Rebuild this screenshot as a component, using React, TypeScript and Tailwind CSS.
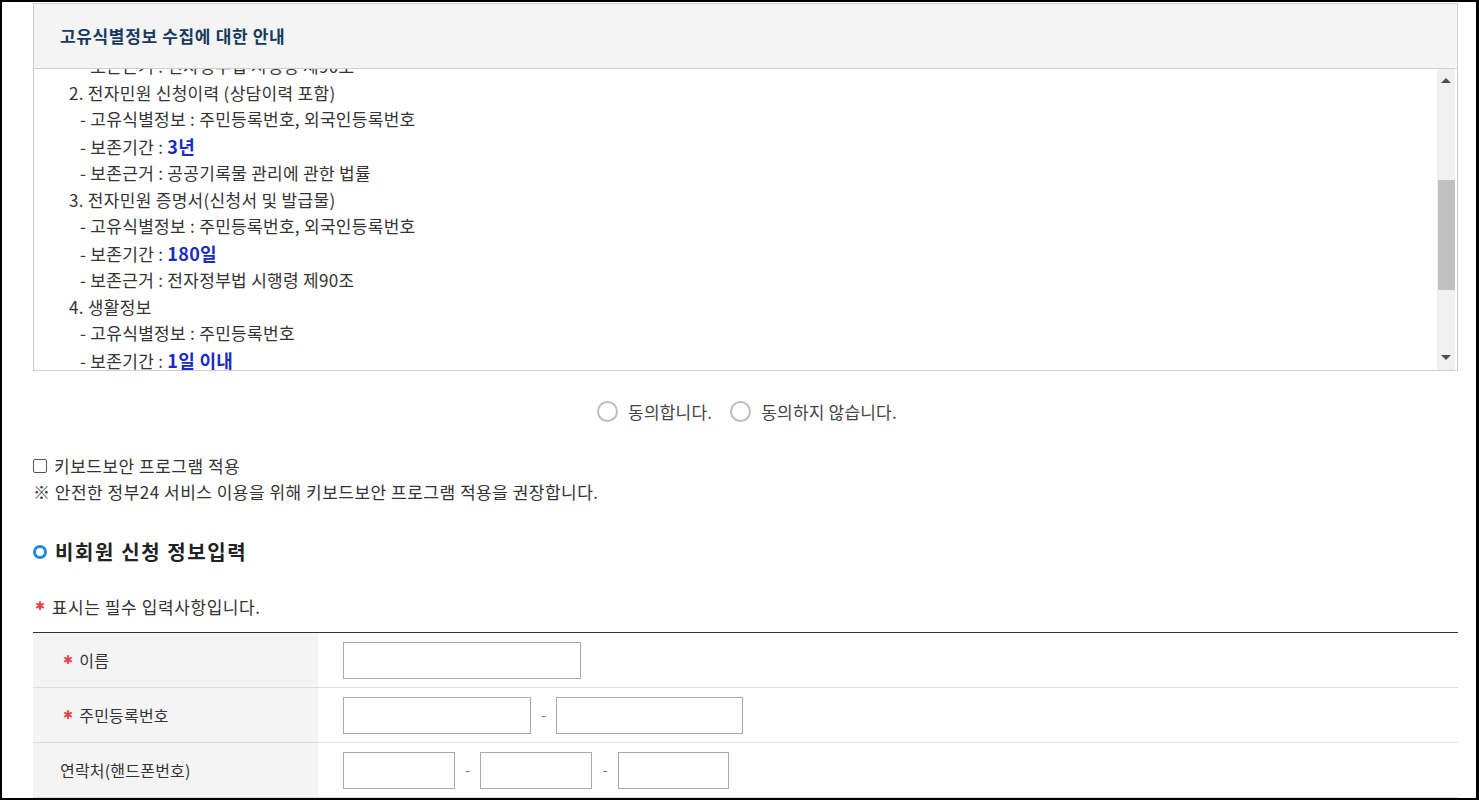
import { useState } from "react";

const retention = [
  { head: "2. 전자민원 신청이력 (상담이력 포함)", items: [
    { k: "고유식별정보", v: "주민등록번호, 외국인등록번호" },
    { k: "보존기간", v: "3년", strong: true },
    { k: "보존근거", v: "공공기록물 관리에 관한 법률" },
  ]},
  { head: "3. 전자민원 증명서(신청서 및 발급물)", items: [
    { k: "고유식별정보", v: "주민등록번호, 외국인등록번호" },
    { k: "보존기간", v: "180일", strong: true },
    { k: "보존근거", v: "전자정부법 시행령 제90조" },
  ]},
  { head: "4. 생활정보", items: [
    { k: "고유식별정보", v: "주민등록번호" },
    { k: "보존기간", v: "1일 이내", strong: true },
  ]},
];

function Req() {
  return <span className="text-[#e3424a] text-[12px] leading-none mr-[6px] font-['DejaVu_Sans',sans-serif]">✱</span>;
}

function Field({ w }: { w: string }) {
  return <input type="text" className={`${w} h-[37px] border border-[#a9a9a9] bg-white outline-none`} />;
}

function Dash() {
  return <span className="mx-[10px] text-[#777] text-[15px]">-</span>;
}

export default function App() {
  const [agree, setAgree] = useState<string | null>(null);
  const [keyboard, setKeyboard] = useState(false);

  return (
    <div className="w-[1479px] h-[800px] overflow-hidden bg-white border-t-2 border-l-2 border-b-2 border-r-[3px] border-black font-['Noto_Sans_CJK_KR','Noto_Sans',sans-serif] text-[#333]">
      <div className="pl-[31px] pr-[18px] pt-px">
        {/* 안내 박스 */}
        <div className="border border-[#cfcfcf]">
          <div className="h-[65px] bg-[#f4f4f4] border-b border-[#cfcfcf] flex items-center pl-[26px]">
            <h2 className="text-[17px] font-bold text-[#173a5e] tracking-[0.65px]">고유식별정보 수집에 대한 안내</h2>
          </div>
          <div className="flex h-[301px]">
            <div className="flex-1 overflow-hidden pl-[35px] text-[17px] leading-[26.5px] tracking-[0.3px] text-[#333]">
              <div className="-mt-[16px]">
                <p className="pl-[11px]">- 보존근거 : 전자정부법 시행령 제90조</p>
                {retention.map((g) => (
                  <div key={g.head}>
                    <p>{g.head}</p>
                    {g.items.map((it) => (
                      <p key={it.k} className="pl-[11px]">
                        - {it.k} :{" "}
                        {it.strong ? (
                          <b className="text-[#1b2bc2] text-[18px]">{it.v}</b>
                        ) : (
                          it.v
                        )}
                      </p>
                    ))}
                  </div>
                ))}
              </div>
            </div>
            {/* scrollbar */}
            <div className="w-[18px] mr-[2px] bg-[#f0f0f0] flex flex-col items-center">
              <div className="h-[22px] flex items-center justify-center">
                <div className="w-0 h-0 border-l-[5px] border-r-[5px] border-b-[5px] border-l-transparent border-r-transparent border-b-[#505050]" />
              </div>
              <div className="h-[89px]" />
              <div className="w-[17px] h-[110px] bg-[#c1c1c1]" />
              <div className="flex-1" />
              <div className="h-[26px] flex items-center justify-center">
                <div className="w-0 h-0 border-l-[5px] border-r-[5px] border-t-[5px] border-l-transparent border-r-transparent border-t-[#505050]" />
              </div>
            </div>
          </div>
        </div>

        {/* 동의 */}
        <div className="mt-[28px] flex justify-center items-center gap-[18px] text-[17px] text-[#444] tracking-[0.2px] pl-[3px]">
          {[
            ["y", "동의합니다."],
            ["n", "동의하지 않습니다."],
          ].map(([v, label]) => (
            <label key={v} className="flex items-center gap-[10px] cursor-pointer" onClick={() => setAgree(v)}>
              <span className="w-[21px] h-[21px] rounded-full border-2 border-[#bdbdbd] bg-white flex items-center justify-center">
                {agree === v && <span className="w-[10px] h-[10px] rounded-full bg-[#1d8ae0]" />}
              </span>
              {label}
            </label>
          ))}
        </div>

        {/* 키보드보안 */}
        <div className="mt-[28px] text-[17px] leading-[26px] text-[#333] tracking-[0.5px]">
          <label className="flex items-center gap-[7px] cursor-pointer">
            <input
              type="checkbox"
              checked={keyboard}
              onChange={(e) => setKeyboard(e.target.checked)}
              className="w-[14px] h-[14px] m-0 appearance-none border border-[#555] rounded-[2px] bg-white checked:bg-[#1d8ae0]"
            />
            키보드보안 프로그램 적용
          </label>
          <p>※ 안전한 정부24 서비스 이용을 위해 키보드보안 프로그램 적용을 권장합니다.</p>
        </div>

        {/* 비회원 신청 정보입력 */}
        <div className="mt-[32px] flex items-center gap-[8px]">
          <span className="w-[14px] h-[14px] rounded-full border-[3.5px] border-[#1d8ae0]" />
          <h3 className="text-[20px] font-bold text-[#222] tracking-[1.6px]">비회원 신청 정보입력</h3>
        </div>

        <p className="mt-[27px] flex items-center text-[17px] text-[#333] tracking-[0.6px] pl-[2px]">
          <Req />
          표시는 필수 입력사항입니다.
        </p>

        {/* 입력 테이블 */}
        <div className="mt-[13px] border-t border-[#333] text-[16px] text-[#333] tracking-[0.2px]">
          <div className="flex h-[55px] border-b border-[#dedede]">
            <div className="w-[285px] bg-[#f4f4f4] flex items-center pl-[30px]">
              <Req />
              이름
            </div>
            <div className="flex-1 flex items-center pl-[25px]">
              <Field w="w-[238px]" />
            </div>
          </div>
          <div className="flex h-[55px] border-b border-[#dedede]">
            <div className="w-[285px] bg-[#f4f4f4] flex items-center pl-[30px]">
              <Req />
              주민등록번호
            </div>
            <div className="flex-1 flex items-center pl-[25px]">
              <Field w="w-[188px]" />
              <Dash />
              <Field w="w-[187px]" />
            </div>
          </div>
          <div className="flex h-[55px] border-b border-[#dedede]">
            <div className="w-[285px] bg-[#f4f4f4] flex items-center pl-[27px]">연락처(핸드폰번호)</div>
            <div className="flex-1 flex items-center pl-[25px]">
              <Field w="w-[112px]" />
              <Dash />
              <Field w="w-[112px]" />
              <Dash />
              <Field w="w-[111px]" />
            </div>
          </div>
        </div>
      </div>
    </div>
  );
}
